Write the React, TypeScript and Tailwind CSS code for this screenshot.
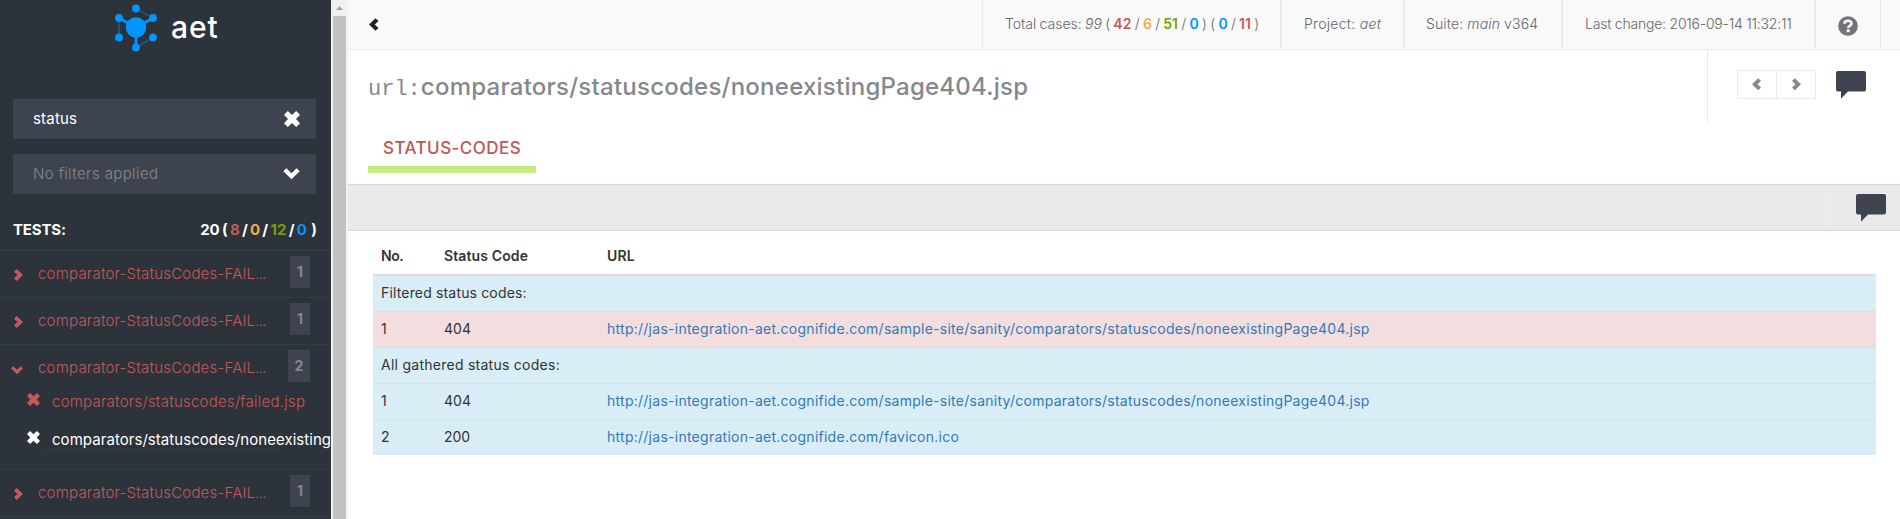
import type { ReactNode } from "react";

type IconProps = { className?: string };

function ChevronRight({ className = "" }: IconProps) {
  return (
    <svg viewBox="0 0 9 12" className={className} fill="currentColor">
      <path d="M0 2.700 2.800 0 9 6 2.800 12 0 9.300 3.500 6Z" />
    </svg>
  );
}

function ChevronLeft({ className = "" }: IconProps) {
  return (
    <svg viewBox="0 0 9 12" className={className} fill="currentColor">
      <path d="M9 2.700 6.200 0 0 6 6.200 12 9 9.300 5.500 6Z" />
    </svg>
  );
}

function ChevronDown({ className = "" }: IconProps) {
  return (
    <svg viewBox="0 0 17 12" className={className} fill="currentColor">
      <path d="M0 3.500 3.200 0.300 8.500 5.400 13.800 0.300 17 3.500 8.500 11.700Z" />
    </svg>
  );
}

function Cross({ className = "" }: IconProps) {
  return (
    <svg viewBox="0 0 16 16" className={className} fill="currentColor">
      <path d="M3.800 0 8 4 12.200 0 16 3.800 12 8 16 12.200 12.200 16 8 12 3.800 16 0 12.200 4 8 0 3.800Z" />
    </svg>
  );
}

function Comment({ className = "" }: IconProps) {
  return (
    <svg viewBox="0 0 30 28" className={className} fill="currentColor">
      <path d="M2 0H28A2 2 0 0 1 30 2V18.500A2 2 0 0 1 28 20.500H12L5 27.800V20.500H2A2 2 0 0 1 0 18.500V2A2 2 0 0 1 2 0Z" />
    </svg>
  );
}

function Question({ className = "" }: IconProps) {
  return (
    <svg viewBox="0 0 20 20" className={className}>
      <circle cx="10" cy="10" r="9.800" fill="#737378" />
      <path
        d="M6.500 7.800C6.500 5.500 8 4.700 10 4.700S13.500 5.800 13.500 7.400C13.500 9.600 10.300 9.600 10.300 12"
        fill="none"
        stroke="#f9f9f9"
        strokeWidth="2.600"
      />
      <rect x="8.700" y="13.300" width="3" height="2.900" fill="#f9f9f9" />
    </svg>
  );
}

function Logo({ className = "" }: IconProps) {
  return (
    <svg viewBox="0 0 44 48" className={className} fill="#0096ff" stroke="#0096ff">
      <path d="M22 4.500 39 14M5 14V33.500M22 43.500 39 33.500" fill="none" strokeWidth="0.900" opacity="0.700" />
      <path d="M22 23.500 5 14M22 23.500 39 14M22 23.500V43.500" fill="none" strokeWidth="2.800" />
      <g stroke="none">
        <circle cx="22" cy="23.500" r="10.200" />
        <circle cx="22" cy="4.500" r="3.900" />
        <circle cx="5" cy="14" r="3.900" />
        <circle cx="39" cy="14" r="3.900" />
        <circle cx="5" cy="33.500" r="3.900" />
        <circle cx="39" cy="33.500" r="3.900" />
        <circle cx="22" cy="43.500" r="3.900" />
      </g>
    </svg>
  );
}

function TestRow({ count, open = false, children }: { count: number; open?: boolean; children?: ReactNode }) {
  return (
    <div className="shrink-0 border-t border-[#353b45]">
      <div className={open ? "flex h-[38px]" : "flex h-[46px]"}>
        <span className="w-[38px] shrink-0 text-[#c35a5a]">
          {open ? (
            <ChevronDown className="mt-[20.500px] ml-[11px] h-[8.500px] w-3" />
          ) : (
            <ChevronRight className="mt-[18px] ml-[14px] h-3 w-[9px]" />
          )}
        </span>
        <span className="flex-1 text-[15px] leading-[45px] font-light tracking-[0.210px] whitespace-nowrap text-[#c35a5a]">
          comparator-StatusCodes-FAIL<span className="tracking-[-0.800px]">...</span>
        </span>
        <span
          className={`mt-[5px] mr-[21px] h-8 bg-[#3e444f] text-center text-sm leading-[31px] font-bold text-[#84888c] ${open ? "w-[22px]" : "w-5"}`}
        >
          {count}
        </span>
      </div>
      {children}
    </div>
  );
}

type StatusRow = { no: number; code: number; url: string };

const PAGE_URL =
  "http://jas-integration-aet.cognifide.com/sample-site/sanity/comparators/statuscodes/noneexistingPage404.jsp";

const filtered: StatusRow[] = [{ no: 1, code: 404, url: PAGE_URL }];
const gathered: StatusRow[] = [
  { no: 1, code: 404, url: PAGE_URL },
  { no: 2, code: 200, url: "http://jas-integration-aet.cognifide.com/favicon.ico" },
];

function SectionRow({ title, first = false, spacing }: { title: string; first?: boolean; spacing: string }) {
  return (
    <tr className="bg-[#d9edf7]">
      <td colSpan={3} className={`px-2 pb-px leading-[34px] ${spacing} ${first ? "" : "border-t border-[#dddddd]"}`}>
        {title}
      </td>
    </tr>
  );
}

function CodeRow({ row, failed = false }: { row: StatusRow; failed?: boolean }) {
  const cell = "border-t border-[#dddddd] px-2 pb-px leading-[34px]";
  return (
    <tr className={failed ? "bg-[#f2dede]" : "bg-[#d9edf7]"}>
      <td className={cell}>{row.no}</td>
      <td className={cell}>{row.code}</td>
      <td className={cell}>
        <a className="tracking-[0.260px] text-[#337ab7]">{row.url}</a>
      </td>
    </tr>
  );
}

function Sidebar() {
  return (
    <aside className="flex w-[331px] shrink-0 flex-col overflow-hidden bg-[#2c333b] text-white">
      <div className="flex h-[99px] shrink-0 pt-1 pl-[114px]">
        <Logo className="h-12 w-11" />
        <span className="ml-[13px] text-[30px] leading-[46px] font-medium tracking-[0.900px]">aet</span>
      </div>
      <div className="mx-[13px] mr-[15px] flex h-10 shrink-0 items-center justify-between bg-[#3e444f] pr-4 pl-5">
        <span className="text-[15px] tracking-[0.200px]">status</span>
        <Cross className="size-4" />
      </div>
      <div className="mx-[13px] mt-[15px] mr-[15px] flex h-10 shrink-0 items-center justify-between bg-[#3e444f] pr-4 pl-5">
        <span className="text-[15px] font-light tracking-[0.390px] text-[#84888c]">No filters applied</span>
        <ChevronDown className="h-[11.500px] w-[17px]" />
      </div>
      <div className="flex h-[55px] shrink-0 justify-between pt-[25.500px] pr-3.5 pl-[13px] text-[15px] leading-5 font-bold">
        <span className="tracking-[-0.150px]">TESTS:</span>
        <span className="[word-spacing:-1.300px] whitespace-pre">
          20 ( <span className="text-[#c35a5a]">8</span> / <span className="text-[#f0ad4e]">0</span> /{" "}
          <span className="text-[#75a100]">12</span> / <span className="text-[#0096ff]">0</span>{"  "})
        </span>
      </div>
      <div className="h-px shrink-0 bg-[#353b45]" />
      <TestRow count={1} />
      <TestRow count={1} />
      <TestRow count={2} open>
        <div className="flex h-[38px] text-[#c35a5a]">
          <Cross className="mt-2.5 ml-[27px] size-[13px]" />
          <span className="ml-3 text-[15px] leading-[37px] font-light tracking-[0.240px] whitespace-nowrap">
            comparators/statuscodes/failed.jsp
          </span>
        </div>
        <div className="flex h-7">
          <Cross className="mt-2.5 ml-[27px] size-[13px] shrink-0" />
          <span className="ml-3 text-[15px] leading-[37px] tracking-[0.050px] whitespace-nowrap">
            comparators/statuscodes/noneexisting
          </span>
        </div>
        <div className="mb-[19px] ml-[42px] h-px w-[241px] bg-[#353b45]" />
      </TestRow>
      <TestRow count={1} />
      <div className="h-px shrink-0 bg-[#353b45]" />
    </aside>
  );
}

function Scrollbar() {
  return (
    <div className="flex w-[17px] shrink-0 flex-col bg-[#f1f1f1]">
      <svg viewBox="0 0 17 16" className="h-4 w-[17px] shrink-0">
        <path d="M5 10 8.500 6 12 10Z" fill="#a3a3a3" />
      </svg>
      <div className="mr-0.5 ml-0.5 flex-1 bg-[#c1c1c1]" />
    </div>
  );
}

function TopBar() {
  return (
    <header className="flex h-[50px] shrink-0 justify-between border-b border-[#e9e9e9] bg-[#f9f9f9]">
      <ChevronLeft className="mt-[18px] ml-[21px] h-[13px] w-[9.500px] text-[#222222]" />
      <div className="flex h-12 text-sm leading-[48px] font-light whitespace-pre text-[#66666b]">
        <div className="w-[298px] border-l border-[#e9e9e9] pl-[22px] [word-spacing:-0.650px]">
          Total cases: <i>99</i> ( <b className="font-semibold text-[#c35a5a]">42</b> /{" "}
          <b className="font-semibold text-[#f0ad4e]">6</b> / <b className="font-semibold text-[#75a100]">51</b> /{" "}
          <b className="font-semibold text-[#0096ff]">0</b> ) ( <b className="font-semibold text-[#0096ff]">0</b> /{" "}
          <b className="font-semibold text-[#c35a5a]">11</b> )
        </div>
        <div className="w-[123px] border-l-2 border-[#e9e9e9] pl-[22px] tracking-[0.290px]">
          Project: <i>aet</i>
        </div>
        <div className="w-[158px] border-l-2 border-[#e9e9e9] pl-[21px] tracking-[0.130px]">
          Suite: <i>main</i> v364
        </div>
        <div className="w-[253px] border-l-2 border-[#e9e9e9] pl-[22px] tracking-[-0.220px]">
          Last change: 2016-09-14 11:32:11
        </div>
        <div className="w-[66px] border-l-2 border-[#e9e9e9] pt-4 pl-[22px]">
          <Question className="size-5" />
        </div>
        <div className="w-5 border-l border-[#e9e9e9]" />
      </div>
    </header>
  );
}

export default function App() {
  return (
    <div className="flex h-[519px] w-full overflow-hidden bg-white font-['Inter','Liberation_Sans',sans-serif] text-sm text-[#333333]">
      <Sidebar />
      <Scrollbar />
      <main className="flex min-w-0 flex-1 flex-col">
        <TopBar />
        <div className="flex h-[73px] shrink-0 justify-between">
          <h1 className="pl-5 text-2xl leading-[74px] font-medium tracking-[0.240px] whitespace-nowrap text-[#84888c]">
            <span className="font-['Liberation_Mono',monospace] text-[22px] font-normal tracking-normal">url:</span>
            comparators/statuscodes/noneexistingPage404.jsp
          </h1>
          <div className="flex w-[193px] border-l border-[#e9e9e9] pt-5 pl-[29px] text-[#84888c]">
            <div className="flex h-[29px] w-[79px] border border-[#e9e9e9]">
              <div className="flex w-[39px] items-center justify-center border-r border-[#e9e9e9]">
                <ChevronLeft className="mr-px h-[12.500px] w-[9px]" />
              </div>
              <div className="flex flex-1 items-center justify-center">
                <ChevronRight className="ml-px h-[12.500px] w-[9px]" />
              </div>
            </div>
            <Comment className="mt-px ml-5 h-7 w-[30px] text-[#3e444f]" />
          </div>
        </div>
        <nav className="flex h-[61px] shrink-0 pl-5">
          <div className="h-[50px] w-[168px] border-b-[7px] border-[#c9ea80] pl-[15px] text-[17px] leading-[50px] font-medium tracking-[0.450px] text-[#c05656]">
            STATUS-CODES
          </div>
        </nav>
        <div className="flex h-[47px] shrink-0 justify-end border-y border-[#d8d8e0] bg-[#eaeaea]">
          <div className="w-[75px] border-l border-[#efefef] pt-[9px] pl-[30px]">
            <Comment className="h-7 w-[30px] text-[#3e444f]" />
          </div>
        </div>
        <table className="mt-[7px] mr-6 ml-[25px] table-fixed border-separate border-spacing-0">
          <colgroup>
            <col className="w-[63px]" />
            <col className="w-[163px]" />
            <col />
          </colgroup>
          <thead>
            <tr className="text-left leading-5 [&>th]:border-b-2 [&>th]:border-[#dddddd] [&>th]:p-2 [&>th]:font-semibold">
              <th className="tracking-[-0.400px]">No.</th>
              <th className="tracking-[0.120px]">Status Code</th>
              <th className="tracking-[0.200px]">URL</th>
            </tr>
          </thead>
          <tbody>
            <SectionRow title="Filtered status codes:" spacing="tracking-[0.160px]" first />
            {filtered.map((row) => (
              <CodeRow key={row.no} row={row} failed />
            ))}
            <SectionRow title="All gathered status codes:" spacing="tracking-[0.260px]" />
            {gathered.map((row) => (
              <CodeRow key={row.no} row={row} />
            ))}
          </tbody>
        </table>
      </main>
    </div>
  );
}
